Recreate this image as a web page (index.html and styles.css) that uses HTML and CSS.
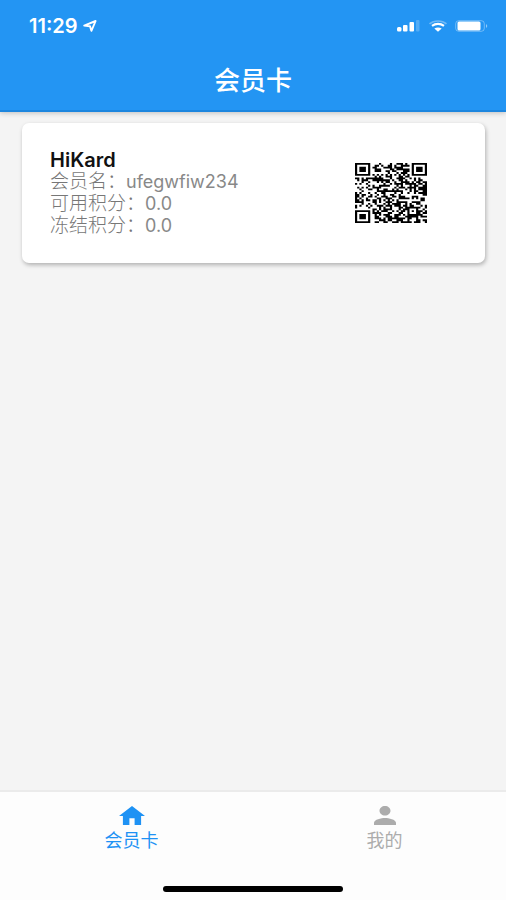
FILE: index.html
```html
<!DOCTYPE html>
<html lang="zh-CN">
<head>
<meta charset="utf-8">
<meta name="viewport" content="width=device-width, initial-scale=1">
<title>会员卡</title>
<link rel="stylesheet" href="styles.css">
</head>
<body>
<header class="header">
  <div class="status">
    <div class="status-left">
      <span class="time">11:29</span>
      <svg class="locate" viewBox="0 0 14 12" aria-hidden="true"><path d="M1.2 5.6 12.6 1 8.4 10.8 7 6.2Z" fill="none" stroke="currentColor" stroke-width="1.9" stroke-linejoin="round"/></svg>
    </div>
    <div class="status-right">
      <svg class="signal" viewBox="0 0 24 12" aria-hidden="true"><g fill="currentColor"><rect x="0" y="7" width="4.500" height="4.500" rx="1.500"/><rect x="6" y="5" width="4.500" height="6.500" rx="1"/><rect x="12.500" y="2" width="4.500" height="9.500" rx="1"/><rect x="19" y="0" width="3.500" height="11.500" rx="1" opacity=".22"/></g></svg>
      <svg class="wifi" viewBox="0 0 20 12" aria-hidden="true"><g fill="none" stroke="currentColor"><path d="M1.500 3.800C6 0 14 0 18.500 3.800" stroke-width="1.600" opacity=".35"/><path d="M4 5.900C7.500 3.300 12.500 3.300 16 5.900" stroke-width="2.200"/></g><path d="M6.300 8.600Q10 6.400 13.700 8.600L10 11.800Z" fill="currentColor"/></svg>
      <svg class="battery" viewBox="0 0 34 12" aria-hidden="true"><rect x=".7" y=".7" width="28.600" height="10.600" rx="3" fill="none" stroke="currentColor" opacity=".35"/><rect x="2.500" y="1.500" width="23" height="9" rx="1.500" fill="currentColor"/><path d="M31 4q2.500 2 0 4z" fill="currentColor" opacity=".5"/></svg>
    </div>
  </div>
  <h1 class="title">会员卡</h1>
</header>
<main class="content">
  <section class="card">
    <div class="info">
      <h2 class="name">HiKard</h2>
      <p class="row">会员名：<span class="value">ufegwfiw234</span></p>
      <p class="row">可用积分：<span class="value">0.0</span></p>
      <p class="row">冻结积分：<span class="value">0.0</span></p>
    </div>
    <svg class="qr" viewBox="0 0 33 33" preserveAspectRatio="none" role="img" aria-label="二维码"><path id="modules"/></svg>
  </section>
</main>
<nav class="tabs">
  <a class="tab active" href="#card">
    <svg class="icon" viewBox="2 3 20 17" preserveAspectRatio="none" aria-hidden="true"><path fill="currentColor" d="M10 20v-6h4v6h5v-8h3L12 3 2 12h3v8z"/></svg>
    <span>会员卡</span>
  </a>
  <a class="tab" href="#mine">
    <svg class="icon person" viewBox="4 4 16 16" preserveAspectRatio="none" aria-hidden="true"><path fill="currentColor" d="M12 12c2.210 0 4-1.790 4-4s-1.790-4-4-4-4 1.790-4 4 1.790 4 4 4zm0 2c-2.670 0-8 1.340-8 4v2h16v-2c0-2.660-5.330-4-8-4z"/></svg>
    <span>我的</span>
  </a>
  <div class="home-bar"></div>
</nav>
<script src="script.js"></script>
</body>
</html>
```
FILE: styles.css
```css
* {
  box-sizing: border-box;
}

body {
  margin: 0;
  min-height: 100vh;
  display: flex;
  flex-direction: column;
  background: #f4f4f4;
  font-family: Inter, "Noto Sans CJK SC", sans-serif;
}

h1, h2, p {
  margin: 0;
}

.header {
  position: relative;
  background: #2395f3;
  color: #fff;
  border-bottom: 2px solid #1c86df;
  box-shadow: 0 1px 5px rgba(0, 0, 0, 0.22);
}

.status {
  display: flex;
  justify-content: space-between;
  align-items: center;
  height: 52px;
  padding: 0 17px 0 29px;
}

.status-left,
.status-right {
  display: flex;
  align-items: center;
}

.status-left {
  gap: 5px;
}

.status-right {
  gap: 7px;
}

.time {
  font-size: 20px;
  font-weight: 600;
}

.locate {
  width: 14px;
  height: 12px;
}

.signal {
  width: 24px;
  height: 12px;
}

.wifi {
  width: 20px;
  height: 12px;
}

.battery {
  width: 34px;
  height: 12px;
}

.title {
  height: 58px;
  line-height: 58px;
  text-align: center;
  font-size: 26px;
  font-weight: 500;
}

.content {
  flex: 1;
  padding: 11px 21px 0 22px;
}

.card {
  display: flex;
  justify-content: space-between;
  align-items: center;
  min-height: 140px;
  padding: 26px 58px 26px 28px;
  border-radius: 7px;
  background: #fff;
  box-shadow: 1px 2px 4px rgba(0, 0, 0, 0.28);
}

.name {
  font-size: 20px;
  line-height: 22px;
  font-weight: 600;
  color: #111;
}

.row {
  font-size: 19px;
  line-height: 22px;
  font-weight: 300;
  color: #777;
}

.value {
  font-size: 18px;
  font-weight: 400;
  color: #888;
}

.qr {
  width: 72px;
  height: 60px;
}

.tabs {
  display: grid;
  grid-template-columns: 1fr 1fr;
  align-content: space-between;
  height: 110px;
  padding: 14px 0 8px;
  border-top: 2px solid #ebebeb;
  background: #fdfdfd;
}

.tab {
  display: flex;
  flex-direction: column;
  align-items: center;
  gap: 4px;
  padding-left: 10px;
  color: #acacac;
  font-size: 18px;
  line-height: 24px;
  text-decoration: none;
}

.active {
  color: #1e92f4;
}

.icon {
  width: 26px;
  height: 19px;
}

.person {
  width: 22px;
}

.home-bar {
  grid-column: 1 / -1;
  justify-self: center;
  width: 180px;
  height: 6px;
  border-radius: 3px;
  background: #000;
}
```
FILE: script.js
```js
// Draws the member code: three finder squares, timing lines and data modules.
const size = 33;
let seed = 20234;

function nextBit() {
  seed = (seed * 1103515 + 12345) % 2147483648;
  return (seed >> 16) & 1;
}

function ring(x, y, cx, cy) {
  return Math.max(Math.abs(x - cx), Math.abs(y - cy));
}

function isDark(x, y) {
  const bit = nextBit();
  for (const [cx, cy] of [[3, 3], [size - 4, 3], [3, size - 4]]) {
    const r = ring(x, y, cx, cy);
    if (r <= 4) return r < 2 || r === 3;
  }
  const align = ring(x, y, size - 7, size - 7);
  if (align <= 2) return align !== 1;
  if (x === 6 || y === 6) return (x + y) % 2 === 0;
  return bit === 1;
}

let path = "";
for (let y = 0; y < size; y++) {
  for (let x = 0; x < size; x++) {
    if (isDark(x, y)) path += `M${x} ${y}h1v1h-1z`;
  }
}
document.getElementById("modules").setAttribute("d", path);
```
